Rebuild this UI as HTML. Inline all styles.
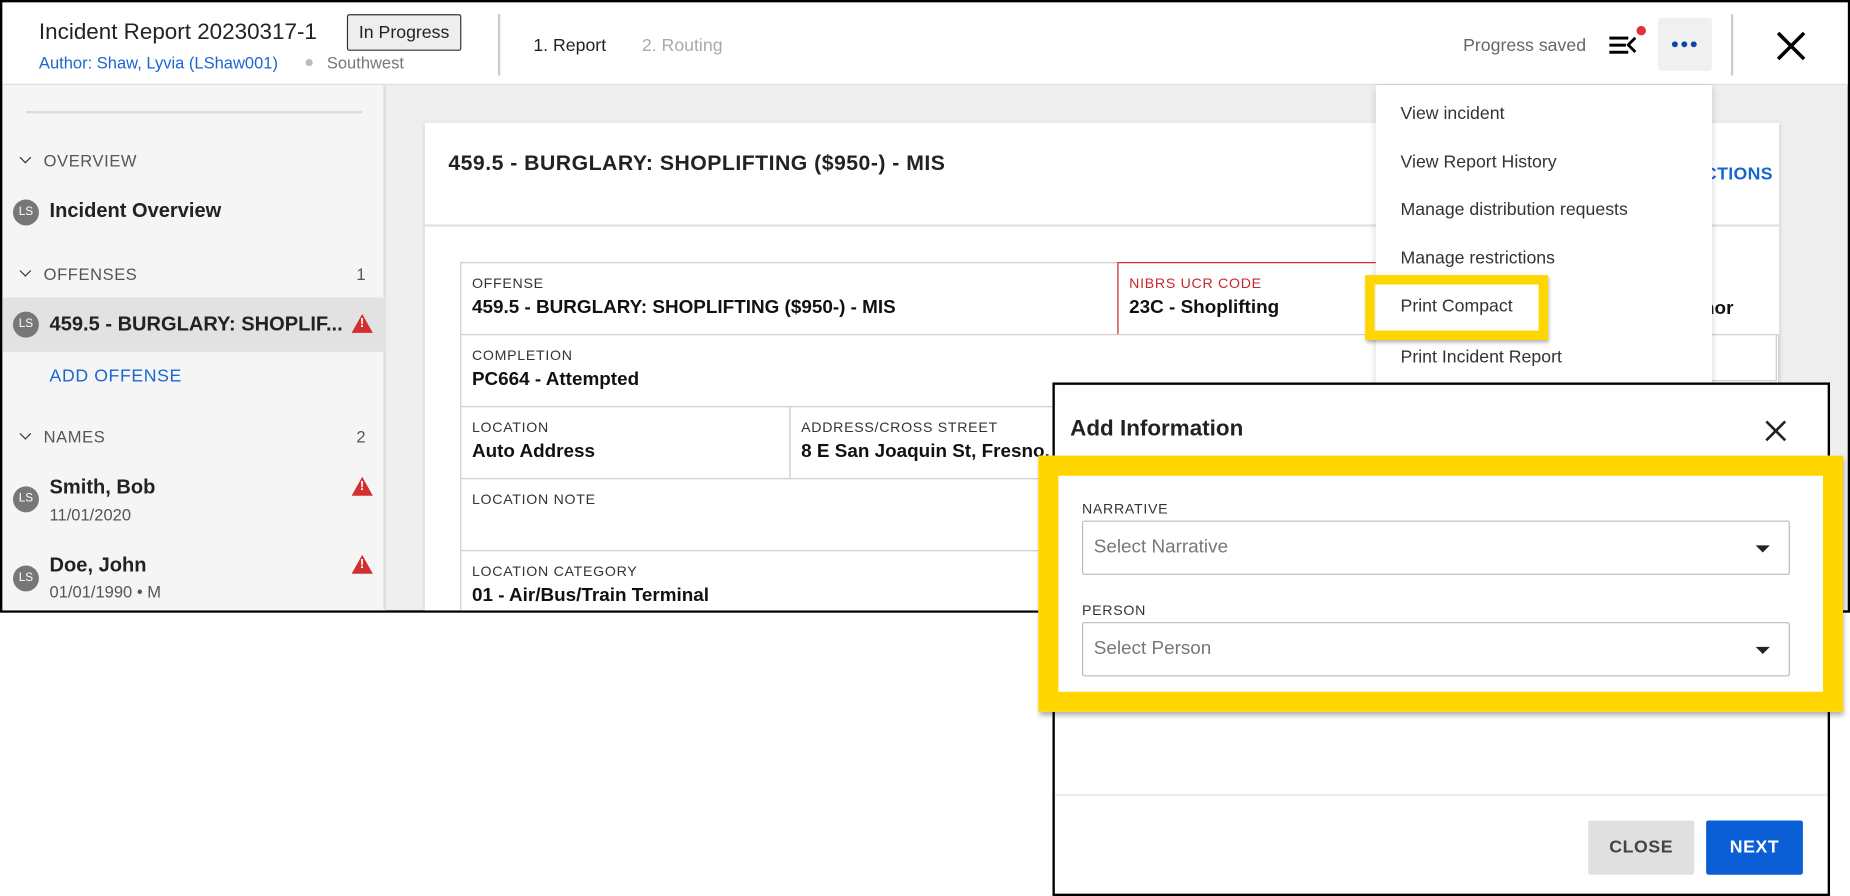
<!DOCTYPE html>
<html><head><meta charset="utf-8"><style>
*{box-sizing:border-box;margin:0;padding:0}
html,body{width:1850px;height:896px;overflow:hidden;background:#fff;font-family:"Liberation Sans",Arial,sans-serif}
#w{position:absolute;left:0;top:0;width:1568px;height:759px;transform:scale(1.1799,1.1805);transform-origin:0 0}
.a{position:absolute}
.win{left:0;top:0;width:1568px;height:519px;border:2px solid #000;background:#eee;overflow:hidden}
.t{position:absolute;white-space:nowrap}
.lbl{font-size:12px;letter-spacing:.6px;color:#333}
.val{font-size:16px;font-weight:bold;color:#111}
.cell{position:absolute;border:1px solid #ccc;background:#fff}
.av{position:absolute;width:22px;height:22px;border-radius:50%;background:#777;color:#fff;font-size:10px;text-align:center;line-height:22px}
.sec{font-size:14px;color:#555;letter-spacing:.5px}
.chev{position:absolute;width:7px;height:7px;border-right:1.8px solid #333;border-bottom:1.8px solid #333;transform:rotate(45deg)}
.tri{position:absolute;width:0;height:0;border-left:9px solid transparent;border-right:9px solid transparent;border-bottom:16px solid #d32f2f}
.tri:after{content:"!";position:absolute;left:-2px;top:2px;color:#fff;font-size:11px;font-weight:bold}
.mi{position:absolute;left:21px;font-size:15px;color:#333}
.sel{position:absolute;left:24px;width:600px;height:46px;border:1px solid #bbb;border-radius:2px;font-size:16px;color:#777;padding:13px 9px}
.sel:after{content:"";position:absolute;right:16px;top:20px;border-left:6px solid transparent;border-right:6px solid transparent;border-top:6px solid #222}
</style></head><body><div id="w">
<div class="a win">
 <div class="a" style="left:0;top:0;width:1566px;height:70px;background:#fff;border-bottom:1px solid #ddd"></div>
 <div class="t" style="left:31px;top:15px;font-size:19px;color:#222">Incident Report 20230317-1</div>
 <div class="a" style="left:292px;top:10px;width:97px;height:31px;border:1px solid #333;background:#eee;border-radius:2px;font-size:15px;color:#222;text-align:center;line-height:29px">In Progress</div>
 <div class="t" style="left:31px;top:43px;font-size:14px;color:#1a66d0">Author: Shaw, Lyvia (LShaw001)</div>
 <div class="a" style="left:257px;top:48px;width:6px;height:6px;border-radius:50%;background:#bbb"></div>
 <div class="t" style="left:275px;top:43px;font-size:14px;color:#777">Southwest</div>
 <div class="a" style="left:420px;top:10px;width:2px;height:52px;background:#ccc"></div>
 <div class="t" style="left:450px;top:28px;font-size:15px;color:#222">1. Report</div>
 <div class="t" style="left:542px;top:28px;font-size:15px;color:#aaa">2. Routing</div>
 <div class="t" style="left:1238px;top:28px;font-size:15px;color:#666">Progress saved</div>
 <svg class="a" style="left:1360px;top:20px" width="36" height="30"><rect x="2" y="9" width="16" height="2.5" fill="#000"/><rect x="2" y="15" width="14" height="2.5" fill="#000"/><rect x="2" y="21" width="16" height="2.5" fill="#000"/><path d="M24 10 L18 16 L24 22" stroke="#000" stroke-width="2.4" fill="none"/><circle cx="29" cy="4" r="4" fill="#e0303a"/></svg>
 <div class="a" style="left:1403px;top:13px;width:46px;height:45px;background:#f0f0f0;border-radius:3px"></div>
 <div class="a" style="left:1415px;top:33px;width:5px;height:5px;border-radius:50%;background:#0d47a1;box-shadow:8px 0 0 #0d47a1,16px 0 0 #0d47a1"></div>
 <div class="a" style="left:1465px;top:10px;width:2px;height:52px;background:#ccc"></div>
 <svg class="a" style="left:1503px;top:24px" width="26" height="26"><path d="M2 2L24 24M24 2L2 24" stroke="#000" stroke-width="3"/></svg>
 <div class="a" style="left:0;top:70px;width:325px;height:450px;background:#f5f5f5;border-right:2px solid #ddd"></div>
 <div class="a" style="left:20px;top:92px;width:285px;height:2px;background:#ddd"></div>
 <div class="chev" style="left:16px;top:128px"></div>
 <div class="t sec" style="left:35px;top:126px">OVERVIEW</div>
 <div class="av" style="left:9px;top:167px">LS</div>
 <div class="t" style="left:40px;top:167px;font-size:17px;color:#222;font-weight:bold">Incident Overview</div>
 <div class="chev" style="left:16px;top:224px"></div>
 <div class="t sec" style="left:35px;top:222px">OFFENSES</div>
 <div class="t sec" style="left:300px;top:222px">1</div>
 <div class="a" style="left:0;top:250px;width:325px;height:46px;background:#e2e2e2"></div>
 <div class="av" style="left:9px;top:262px">LS</div>
 <div class="t" style="left:40px;top:263px;font-size:17px;color:#222;font-weight:bold">459.5 - BURGLARY: SHOPLIF...</div>
 <div class="tri" style="left:296px;top:264px"></div>
 <div class="t" style="left:40px;top:308px;font-size:15px;color:#1a66d0;letter-spacing:.5px">ADD OFFENSE</div>
 <div class="chev" style="left:16px;top:362px"></div>
 <div class="t sec" style="left:35px;top:360px">NAMES</div>
 <div class="t sec" style="left:300px;top:360px">2</div>
 <div class="av" style="left:9px;top:410px">LS</div>
 <div class="t" style="left:40px;top:401px;font-size:17px;color:#222;font-weight:bold">Smith, Bob</div>
 <div class="t" style="left:40px;top:426px;font-size:14px;color:#555">11/01/2020</div>
 <div class="tri" style="left:296px;top:402px"></div>
 <div class="av" style="left:9px;top:477px">LS</div>
 <div class="t" style="left:40px;top:467px;font-size:17px;color:#222;font-weight:bold">Doe, John</div>
 <div class="t" style="left:40px;top:491px;font-size:14px;color:#555">01/01/1990 • M</div>
 <div class="tri" style="left:296px;top:468px"></div>
 <div class="a" style="left:358px;top:102px;width:1148px;height:430px;background:#fff;box-shadow:0 1px 3px rgba(0,0,0,.2)"></div>
 <div class="t" style="left:378px;top:126px;font-size:18px;color:#222;font-weight:bold;letter-spacing:.4px">459.5 - BURGLARY: SHOPLIFTING ($950-) - MIS</div>
 <div class="t" style="left:1431px;top:137px;font-size:15px;color:#1a66d0;font-weight:bold;letter-spacing:.3px">ACTIONS</div>
 <div class="a" style="left:358px;top:188px;width:1148px;height:2px;background:#e3e3e3"></div>
 <div class="cell" style="left:388px;top:220px;width:558px;height:62px"></div>
 <div class="t lbl" style="left:398px;top:231px">OFFENSE</div>
 <div class="t val" style="left:398px;top:250px">459.5 - BURGLARY: SHOPLIFTING ($950-) - MIS</div>
 <div class="a" style="left:945px;top:220px;width:240px;height:62px;border:1px solid #c62828;background:#fff"></div>
 <div class="t lbl" style="left:955px;top:231px;color:#c62828">NIBRS UCR CODE</div>
 <div class="t val" style="left:955px;top:250px">23C - Shoplifting</div>
 <div class="t val" style="left:1364px;top:251px">Misdemeanor</div>
 <div class="cell" style="left:388px;top:281px;width:1118px;height:62px"></div>
 <div class="a" style="left:1440px;top:281px;width:64px;height:40px;border:1px solid #ccc;background:#fff"></div>
 <div class="t lbl" style="left:398px;top:292px">COMPLETION</div>
 <div class="t val" style="left:398px;top:311px">PC664 - Attempted</div>
 <div class="cell" style="left:388px;top:342px;width:280px;height:62px"></div>
 <div class="cell" style="left:667px;top:342px;width:500px;height:62px"></div>
 <div class="t lbl" style="left:398px;top:353px">LOCATION</div>
 <div class="t val" style="left:398px;top:372px">Auto Address</div>
 <div class="t lbl" style="left:677px;top:353px">ADDRESS/CROSS STREET</div>
 <div class="t val" style="left:677px;top:372px">8 E San Joaquin St, Fresno, CA</div>
 <div class="cell" style="left:388px;top:403px;width:1118px;height:62px"></div>
 <div class="t lbl" style="left:398px;top:414px">LOCATION NOTE</div>
 <div class="cell" style="left:388px;top:464px;width:1118px;height:62px"></div>
 <div class="t lbl" style="left:398px;top:475px">LOCATION CATEGORY</div>
 <div class="t val" style="left:398px;top:494px">01 - Air/Bus/Train Terminal</div>
 <div class="a" style="left:1164px;top:70px;width:285px;height:260px;background:#fff;box-shadow:0 2px 6px rgba(0,0,0,.2)">
  <div class="mi" style="top:16px">View incident</div>
  <div class="mi" style="top:57px">View Report History</div>
  <div class="mi" style="top:97px">Manage distribution requests</div>
  <div class="mi" style="top:138px">Manage restrictions</div>
  <div class="mi" style="top:179px">Print Compact</div>
  <div class="mi" style="top:222px">Print Incident Report</div>
 </div>
</div>
<div class="a" style="left:1157px;top:233px;width:155px;height:55px;border:8px solid #ffd600;box-shadow:1px 2px 3px rgba(0,0,0,.3)"></div>
<div class="a" style="left:892px;top:324px;width:659px;height:435px;border:2px solid #000;background:#fff">
 <div class="t" style="left:13px;top:27px;font-size:19px;color:#222;font-weight:bold">Add Information</div>
 <svg class="a" style="left:601px;top:29px" width="20" height="20"><path d="M2 2L18 18M18 2L2 18" stroke="#222" stroke-width="2.2"/></svg>
 <div class="a" style="left:0;top:347px;width:655px;height:1px;background:#ddd"></div>
 <div class="a" style="left:452px;top:369px;width:90px;height:46px;background:#e0e0e0;border-radius:2px;font-size:15px;font-weight:bold;color:#444;text-align:center;line-height:46px;letter-spacing:.5px">CLOSE</div>
 <div class="a" style="left:552px;top:369px;width:82px;height:46px;background:#0a5fd6;border-radius:2px;font-size:15px;font-weight:bold;color:#fff;text-align:center;line-height:46px;letter-spacing:.5px">NEXT</div>
</div>
<div class="a" style="left:880px;top:386px;width:682px;height:217px;border:17px solid #ffd600;background:#fff;box-shadow:1px 3px 4px rgba(0,0,0,.3)">
 <div class="t lbl" style="left:20px;top:21px">NARRATIVE</div>
 <div class="sel" style="left:20px;top:38px">Select Narrative</div>
 <div class="t lbl" style="left:20px;top:107px">PERSON</div>
 <div class="sel" style="left:20px;top:124px">Select Person</div>
</div>
</div></body></html>
